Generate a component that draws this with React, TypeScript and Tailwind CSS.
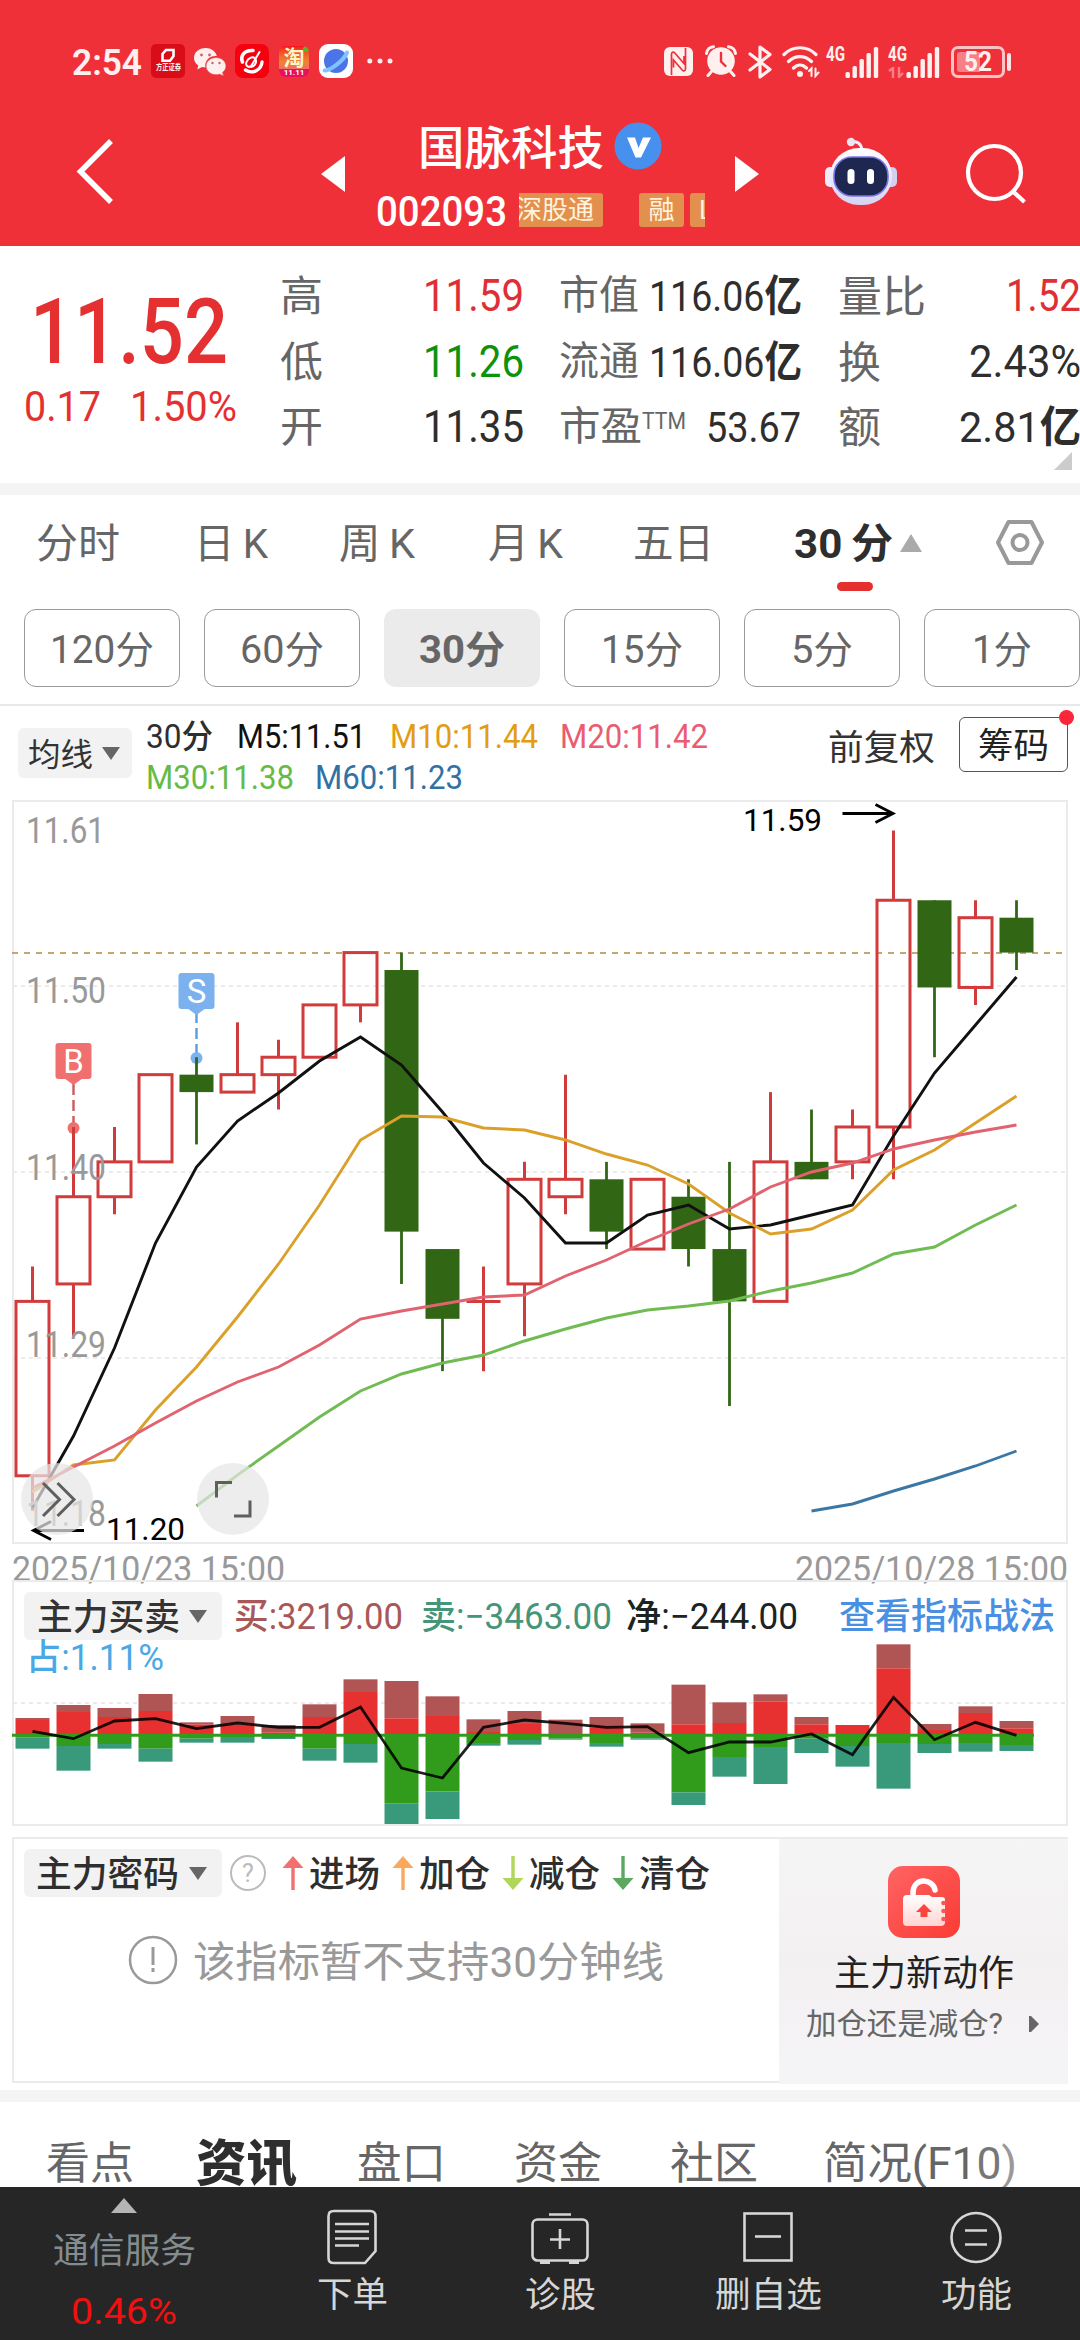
import { useLayoutEffect, useRef, type ReactNode } from "react";

/** Text squeezed or stretched horizontally so that it fills a given width. */
function Fit({ w, className = "", children }: { w: number; className?: string; children: ReactNode }) {
  const ref = useRef<HTMLSpanElement>(null);
  useLayoutEffect(() => {
    const el = ref.current;
    if (!el) return;
    el.style.transform = "none";
    const natural = el.getBoundingClientRect().width;
    if (natural > 0) el.style.transform = `translateY(2px) scaleX(${w / natural})`;
  }, [w, children]);
  return (
    <span className={`block shrink-0 whitespace-nowrap leading-none ${className}`} style={{ width: w }}>
      <span ref={ref} className="inline-block origin-left">
        {children}
      </span>
    </span>
  );
}

const STEP = 41;
const X0 = 32.5;
const cx = (i: number) => X0 + STEP * i;
// Offsets below the session high, in cents: [rising, high, bodyTop, bodyBottom, low]
const candles: [number, number, number, number, number][] = [
  [1, 25, 27, 37, 39], [1, 17, 21, 26, 29], [1, 17, 19, 21, 22], [1, 14, 14, 19, 19], [0, 13, 14, 15, 18],
  [1, 11, 14, 15, 15], [1, 12, 13, 14, 16], [1, 10, 10, 13, 13], [1, 7, 7, 10, 11], [0, 7, 8, 23, 26],
  [0, 24, 24, 28, 31], [1, 25, 27, 27, 31], [1, 19, 20, 26, 29], [1, 14, 20, 21, 22], [0, 19, 20, 23, 24],
  [1, 20, 20, 24, 24], [0, 20, 21, 24, 25], [0, 19, 24, 27, 33], [1, 15, 19, 27, 27], [0, 16, 19, 20, 20],
  [1, 16, 17, 19, 20], [1, 0, 4, 17, 20], [0, 4, 4, 9, 13], [1, 4, 5, 9, 10], [0, 4, 5, 7, 8],
];
const py = (n: number) => 830.5 + n * 17.44;

const averages: { color: string; from: number; y: number[] }[] = [
  { color: "#111111", from: 0, y: [1508, 1436, 1348, 1243, 1167, 1121, 1093, 1061, 1037, 1065, 1112, 1163, 1198, 1243, 1243, 1215, 1205, 1229, 1225, 1215, 1205, 1136, 1073, 1025, 977] },
  { color: "#dba02a", from: 0, y: [1492, 1465, 1460, 1410, 1367, 1317, 1264, 1205, 1140, 1116, 1117, 1128, 1130, 1140, 1154, 1165, 1184, 1213, 1234, 1229, 1210, 1170, 1150, 1123, 1096] },
  { color: "#e0636f", from: 0, y: [1488, 1467, 1446, 1423, 1401, 1382, 1367, 1345, 1319, 1311, 1304, 1297, 1295, 1276, 1260, 1241, 1224, 1209, 1187, 1172, 1163, 1149, 1140, 1132, 1125] },
  { color: "#70bb52", from: 4, y: [1506, 1475, 1446, 1417, 1391, 1374, 1363, 1355, 1341, 1329, 1318, 1310, 1306, 1301, 1291, 1283, 1273, 1254, 1247, 1225, 1205] },
  { color: "#3b77a5", from: 19, y: [1511, 1504, 1491, 1479, 1466, 1451] },
];

// Thirds of a pixel below the top of the flow panel: [dark red, red, green, teal]
const flows: [number, number, number, number][] = [
  [414, 420, 473, 506], [375, 396, 498, 572], [384, 411, 492, 506], [342, 393, 506, 545], [427, 434, 476, 488],
  [408, 434, 471, 488], [435, 457, 474, 477], [373, 411, 506, 542], [298, 336, 492, 548], [303, 415, 671, 732],
  [349, 408, 634, 717], [418, 456, 489, 497], [393, 432, 480, 494], [419, 462, 476, 479], [411, 443, 489, 500],
  [430, 458, 475, 479], [314, 433, 637, 675], [367, 429, 531, 590], [343, 364, 501, 612], [411, 433, 476, 519],
  [435, 435, 498, 560], [193, 265, 489, 626], [432, 450, 492, 519], [379, 399, 489, 515], [423, 445, 495, 513],
];
const net = [454, 476, 423, 416, 446, 429, 442, 442, 381, 564, 594, 442, 420, 430, 442, 440, 518, 486, 486, 462, 524, 352, 479, 427, 466];

function Signal() {
  return (
    <svg className="block h-[33px] w-[35px] shrink-0" viewBox="0 0 35 33" fill="#fff0f0">
      <rect x="0.5" y="26" width="4.4" height="6" rx="1.5" />
      <rect x="7.5" y="20" width="4.4" height="12" rx="1.5" />
      <rect x="14.5" y="13" width="4.4" height="19" rx="1.5" />
      <rect x="21.5" y="7" width="4.4" height="25" rx="1.5" />
      <rect x="28.8" y="1" width="4.4" height="31" rx="1.5" />
    </svg>
  );
}

function StatusBar() {
  return (
    <div className="flex h-[122px] items-start pt-[44px] text-[#fff0f0]">
      <Fit w={70} className="-mt-px ml-[72px] text-[36px] font-semibold">2:54</Fit>
      <div className="ml-[9px] flex h-[34px] w-[34px] shrink-0 flex-col items-center rounded-[5px] bg-[#d80d18] pt-[4px]">
        <svg className="block h-[15px] w-[14px]" viewBox="0 0 14 15" fill="none" stroke="#fff" strokeWidth="2.6">
          <path d="M5 2h7.5v6L9 12.7H1.5V6z" />
        </svg>
        <Fit w={25} className="-mt-px text-[8px] font-bold">方正证券</Fit>
      </div>
      <svg className="ml-[9px] mt-[4px] block h-[28px] w-[32px] shrink-0" viewBox="0 0 32 28">
        <path d="M11.5 0C5 0 0 4.400 0 10c0 3.200 1.700 5.800 4.300 7.500L3.300 21.500l4.600-2.400c1.200.3 2.400.5 3.600.5A10 9.500 0 0 1 22.800 8C21.700 3.400 17 0 11.500 0z" fill="#fff0f0" />
        <path d="M22 9.500c-5.500 0-10 3.900-10 8.600 0 4.800 4.500 8.700 10 8.700 1.300 0 2.500-.2 3.600-.6l4 1.800-1-3.600c2.100-1.500 3.400-3.700 3.400-6.300 0-4.700-4.500-8.600-10-8.600z" fill="#fff0f0" stroke="#e8505a" strokeWidth="0.800" />
        <g fill="#d06068">
          <circle cx="7.500" cy="7" r="1.400" /><circle cx="15.500" cy="7" r="1.400" />
          <circle cx="18.500" cy="15" r="1.200" /><circle cx="25.500" cy="15" r="1.200" />
        </g>
      </svg>
      <svg className="ml-[9px] block h-[34px] w-[34px] shrink-0" viewBox="0 0 34 34" fill="none" stroke="#fff" strokeLinecap="round">
        <rect width="34" height="34" rx="8" fill="#f6000f" stroke="none" />
        <path d="M18 6.500C9 6 5 12 7.500 18" strokeWidth="3.600" />
        <path d="M10.500 26c7 4.500 16 0 16.500-8" strokeWidth="3.400" />
        <path d="M24.500 8l-8 13.500c-2.500 3-6.500.5-5-3.500 1.500-4 6-6 8.500-3.500 2.500 3 0 8-4 8.500" strokeWidth="2" />
      </svg>
      <div className="relative ml-[10px] mt-[2px] flex h-[31px] w-[30px] shrink-0 flex-col items-center overflow-hidden rounded-[6px] bg-gradient-to-b from-[#f50c1c] via-[#ee8232] to-[#f3557b]">
        <span className="mt-[1px] text-[21px] font-bold leading-[22px] text-[#fff4c8]">淘</span>
        <span className="flex h-[8px] w-full items-center justify-center bg-[#e8105a] text-[8px] font-bold leading-none text-white">11.11</span>
        <span className="absolute right-0 top-0 h-[6px] w-[6px] rounded-full bg-[#55b82a]" />
      </div>
      <svg className="ml-[10px] block h-[34px] w-[34px] shrink-0" viewBox="0 0 34 34">
        <rect width="34" height="34" rx="9" fill="#fff" />
        <circle cx="17" cy="17" r="12" fill="#4a74e8" />
        <path d="M5.500 26.500C10 27 25 17 28 8.500" fill="none" stroke="#80c4ff" strokeWidth="4" strokeLinecap="round" />
      </svg>
      <svg className="ml-[14px] mt-[14px] block h-[6px] w-[26px] shrink-0" viewBox="0 0 26 6" fill="#fff0f0">
        <circle cx="2.800" cy="3" r="2.500" /><circle cx="13" cy="3" r="2.500" /><circle cx="23" cy="3" r="2.500" />
      </svg>
      {/* System indicators */}
      <svg className="ml-[271px] mt-[3px] block h-[29px] w-[29px] shrink-0" viewBox="0 0 29 29">
        <rect width="29" height="29" rx="6" fill="#fff0f0" />
        <path d="M7.500 28V7.500c0-2.500 1.700-3.200 3.300-1.500L20 16.500V9M21.500 1v20.500c0 2.500-1.700 3.200-3.300 1.500L9.500 13v7.500" fill="none" stroke="#ef3039" strokeWidth="1.700" />
      </svg>
      <svg className="ml-[12px] mt-[1px] block h-[32px] w-[32px] shrink-0" viewBox="0 0 32 32">
        <path d="M6.500 26.500L3 30.500M25.500 26.500l3.500 4M1.500 8.500C2 4.500 5 2 8.500 1.800M30.500 8.500C30 4.500 27 2 23.500 1.800" stroke="#fff0f0" strokeWidth="3" strokeLinecap="round" fill="none" />
        <circle cx="16" cy="16" r="13.800" fill="#fff0f0" />
        <path d="M16 8v8.500l4.500 4.500" stroke="#ef3039" strokeWidth="2.400" fill="none" strokeLinecap="round" />
      </svg>
      <svg className="ml-[11px] mt-px block h-[34px] w-[25px] shrink-0" viewBox="0 0 25 34" fill="none" stroke="#fff0f0" strokeWidth="3.200" strokeLinecap="round" strokeLinejoin="round">
        <path d="M2 9l20 15.500L12 32V2l10 7.500L2 25" />
      </svg>
      <svg className="ml-[9px] mt-[2px] block h-[32px] w-[38px] shrink-0" viewBox="0 0 38 32" fill="none" stroke="#fff0f0" strokeWidth="3.200" strokeLinecap="round">
        <path d="M2 8.500C11-.5 25-.5 34 8.500M6.500 15.500c7-6.500 16-6.500 23 0M11.500 22c4-4 9-4 13 0" />
        <circle cx="18" cy="28" r="3" fill="#fff0f0" stroke="none" />
        <path d="M27 25l2.500-2.500V30M33.500 22.500V30l3-3.500" strokeWidth="2" />
      </svg>
      <Fit w={19} className="-mt-[2px] ml-[6px] text-[20px] font-bold">4G</Fit>
      <div className="mt-[2px]"><Signal /></div>
      <div className="ml-[8px] w-[18px]">
        <Fit w={19} className="-mt-[2px] text-[20px] font-bold">4G</Fit>
        <svg className="mt-[5px] block h-[11px] w-[17px]" viewBox="0 0 17 11" fill="none" stroke="#f98088" strokeWidth="2.400">
          <path d="M1 4l4-3v10M11 0v10l4-4" />
        </svg>
      </div>
      <div className="mt-[2px]"><Signal /></div>
      <div className="ml-[10px] mt-[2px] flex h-[32px] w-[54px] shrink-0 items-center justify-center rounded-[7px] border-[3px] border-[#fcc3c6] bg-[#ef3039] p-[3px]">
        <div className="flex h-full w-full items-center justify-center rounded-[3px] bg-gradient-to-r from-[#f77f86] from-55% to-[#ef3039] to-55%">
          <Fit w={28} className="-mt-[4px] text-[27px] font-bold">52</Fit>
        </div>
      </div>
      <span className="ml-[2px] mt-[9px] h-[18px] w-[4px] shrink-0 rounded-[2px] bg-[#ffe5e6]" />
    </div>
  );
}

function Robot() {
  return (
    <svg className="block h-[68px] w-[74px] shrink-0" viewBox="0 0 74 68">
      <defs>
        <linearGradient id="shell" x1="0" y1="0" x2="0" y2="1">
          <stop offset="0" stopColor="#ffffff" /><stop offset="1" stopColor="#d5d3f2" />
        </linearGradient>
      </defs>
      <path d="M27 5c6-1 10 1 11 8" fill="none" stroke="#f0eefb" strokeWidth="3" />
      <circle cx="27" cy="5" r="4.200" fill="#ebe4f3" />
      <rect x="1" y="30" width="12" height="20" rx="5" fill="#eceafd" />
      <rect x="61" y="30" width="12" height="20" rx="5" fill="#d3cff3" />
      <rect x="6" y="11" width="62" height="57" rx="29" fill="url(#shell)" />
      <rect x="10" y="20" width="54" height="39" rx="18" fill="#1d2750" stroke="#7b74e8" strokeWidth="1.600" />
      <rect x="23.500" y="32" width="7" height="15" rx="3.500" fill="#fff" />
      <rect x="43" y="32" width="7" height="15" rx="3.500" fill="#fff" />
    </svg>
  );
}

function Header() {
  return (
    <header className="h-[246px] bg-[#f03039]">
      <StatusBar />
      <div className="flex items-start text-white">
        <svg className="ml-[76px] mt-[16px] block h-[66px] w-[38px] shrink-0" viewBox="0 0 38 66" fill="none" stroke="#fff" strokeWidth="5.500">
          <path d="M35 3L4.500 33.500 35 64" />
        </svg>
        <svg className="ml-[207px] mt-[34px] block h-[36px] w-[24px] shrink-0" viewBox="0 0 24 36" fill="#fff"><path d="M24 0v36L0 18z" /></svg>
        <div className="ml-[31px] w-[329px] shrink-0">
          <div className="flex items-center pl-[42px]">
            <Fit w={186} className="text-[46px] font-medium">国脉科技</Fit>
            <svg className="ml-[10px] block h-[48px] w-[48px] shrink-0" viewBox="0 0 48 48">
              <circle cx="24" cy="24" r="23.500" fill="#4790ee" />
              <path d="M13 15.500h8l3.500 10.500 4.500-10.500h8L27 35.500h-5.500z" fill="#fff" />
            </svg>
          </div>
          <div className="mt-[20px] flex items-start">
            <Fit w={131} className="-mt-px text-[42px] font-medium">002093</Fit>
            <div className="ml-[12px] mt-[3px] flex w-[186px] overflow-hidden text-[26px] leading-none text-[#fff3dc]">
              <div className="-ml-[3px] h-[34px] w-[87px] shrink-0 rounded-[3px] bg-[#e38f4d] pt-[4px]">深股通</div>
              <div className="ml-[36px] flex h-[34px] w-[45px] shrink-0 justify-center rounded-[3px] bg-[#e38f4d] pt-[4px]">融</div>
              <div className="ml-[6px] h-[34px] w-[45px] shrink-0 rounded-[3px] bg-[#e38f4d] pl-[9px] pt-[4px]">L2</div>
            </div>
          </div>
        </div>
        <svg className="ml-[30px] mt-[34px] block h-[36px] w-[24px] shrink-0" viewBox="0 0 24 36" fill="#fff"><path d="M0 0v36l24-18z" /></svg>
        <div className="ml-[65px] mt-[15px]"><Robot /></div>
        <svg className="ml-[67px] mt-[20px] block h-[62px] w-[62px] shrink-0" viewBox="0 0 62 62" fill="none" stroke="#fff" strokeWidth="4.200">
          <circle cx="29.500" cy="30.500" r="26.500" /><path d="M47.500 49l12 11" />
        </svg>
      </div>
    </header>
  );
}

const num = "mt-[-1px] text-[43px] font-[450] text-[#2e2e2e]";
const val = "-mt-[2px] text-[44px] font-[450]";

function Quote() {
  return (
    <section className="h-[237px] bg-white">
      <div className="flex">
        <div className="w-[280px] shrink-0 text-[#e43030]">
          <Fit w={198} className="ml-[30px] mt-[40px] text-[90px] font-medium">11.52</Fit>
          <div className="mt-[8px] flex text-[42px] font-[450]">
            <Fit w={77} className="ml-[24px]">0.17</Fit>
            <Fit w={107} className="ml-[29px]">1.50%</Fit>
          </div>
        </div>
        <div className="w-[244px] shrink-0 pt-[28px] text-[42px] text-[#666]">
          <div className="flex h-[65.5px] justify-between"><Fit w={43}>高</Fit><Fit w={101} className={val + " text-[#e02f34]"}>11.59</Fit></div>
          <div className="flex h-[65.5px] justify-between"><Fit w={43}>低</Fit><Fit w={101} className={val + " text-[#0c930c]"}>11.26</Fit></div>
          <div className="flex h-[65.5px] justify-between"><Fit w={43}>开</Fit><Fit w={101} className={val + " text-[#2e2e2e]"}>11.35</Fit></div>
        </div>
        <div className="ml-[35px] w-[243px] shrink-0 pt-[28px] text-[40px] text-[#666]">
          <div className="flex h-[65.5px] justify-between"><Fit w={80}>市值</Fit><Fit w={153} className={num}>116.06<b>亿</b></Fit></div>
          <div className="flex h-[65.5px] justify-between"><Fit w={80}>流通</Fit><Fit w={153} className={num}>116.06<b>亿</b></Fit></div>
          <div className="flex h-[65.5px]"><Fit w={83}>市盈</Fit><Fit w={44} className="mt-[3px] text-[23px]">TTM</Fit><Fit w={95} className={"ml-[20px] " + num}>53.67</Fit></div>
        </div>
        <div className="ml-[36px] w-[243px] shrink-0 pt-[28px] text-[43px] text-[#666]">
          <div className="flex h-[65.5px] justify-between"><Fit w={88}>量比</Fit><Fit w={75} className={val + " text-[#e02f34]"}>1.52</Fit></div>
          <div className="flex h-[65.5px] justify-between"><Fit w={43}>换</Fit><Fit w={112} className={val + " text-[#2e2e2e]"}>2.43%</Fit></div>
          <div className="flex h-[65.5px] justify-between"><Fit w={43}>额</Fit><Fit w={122} className={num}>2.81<b>亿</b></Fit></div>
        </div>
      </div>
      <svg className="ml-[1054px] -mt-[19px] block h-[18px] w-[18px]" viewBox="0 0 18 18" fill="#ccc"><path d="M18 0v18H0z" /></svg>
    </section>
  );
}

function Periods() {
  const spans: [string, number, boolean][] = [
    ["120分", 104, false], ["60分", 84, false], ["30分", 86, true], ["15分", 82, false], ["5分", 62, false], ["1分", 60, false],
  ];
  return (
    <section className="h-[211px] border-b-2 border-[#e8e8e8]">
      <div className="flex h-[114px] items-start pt-[27px] text-[41px] text-[#666]">
        <Fit w={84} className="ml-[36px]">分时</Fit>
        <Fit w={74} className="ml-[74px]">日{"\u2009"}K</Fit>
        <Fit w={76} className="ml-[71px]">周{"\u2009"}K</Fit>
        <Fit w={75} className="ml-[73px]">月{"\u2009"}K</Fit>
        <Fit w={81} className="ml-[70px]">五日</Fit>
        <div className="ml-[79px] flex w-[100px] shrink-0 flex-col items-center">
          <Fit w={99} className="font-bold text-[#2e2e2e]">30{"\u2009"}分</Fit>
          <span className="mt-[19px] ml-[24px] h-[9px] w-[36px] rounded-full bg-[#e52f2f]" />
        </div>
        <svg className="ml-[7px] mt-[12px] block h-[18px] w-[22px] shrink-0" viewBox="0 0 22 18" fill="#aaa"><path d="M11 0l11 18H0z" /></svg>
        <svg className="ml-[73px] -mt-[3px] block h-[47px] w-[50px] shrink-0" viewBox="0 0 50 47" fill="none" stroke="#999" strokeWidth="4" strokeLinejoin="round">
          <path d="M13.500 3h23L47 23.500 36.500 44h-23L3 23.500z" /><circle cx="25" cy="23.500" r="7.500" />
        </svg>
      </div>
      <div className="flex gap-[24px] pl-[24px]">
        {spans.map(([label, w, on]) => (
          <div key={label} className={`flex h-[78px] w-[156px] shrink-0 items-center justify-center rounded-[12px] text-[38px] text-[#666] ${on ? "bg-[#ebebeb] font-bold" : "border-[1.500px] border-[#999]"}`}>
            <Fit w={w}>{label}</Fit>
          </div>
        ))}
      </div>
    </section>
  );
}

function Down({ className = "" }: { className?: string }) {
  return <svg className={`block h-[13px] w-[18px] shrink-0 ${className}`} viewBox="0 0 18 13" fill="#666"><path d="M0 0h18L9 13z" /></svg>;
}

function Legend() {
  return (
    <div className="flex h-[94px] items-start">
      <div className="ml-[18px] mt-[22px] flex h-[50px] w-[114px] shrink-0 items-center rounded-[6px] bg-[#f2f2f2] text-[32px] text-[#333]">
        <Fit w={65} className="ml-[10px]">均线</Fit><Down className="ml-[9px]" />
      </div>
      <div className="ml-[14px] w-[660px] shrink-0 pt-[12px] text-[33px] font-[450]">
        <div className="flex">
          <Fit w={67} className="text-[#2e2e2e]">30分</Fit>
          <Fit w={129} className="ml-[24px] text-[#111]">M5:11.51</Fit>
          <Fit w={148} className="ml-[24px] text-[#e29d12]">M10:11.44</Fit>
          <Fit w={148} className="ml-[22px] text-[#ea5c72]">M20:11.42</Fit>
        </div>
        <div className="mt-[8px] flex">
          <Fit w={148} className="text-[#66bb46]">M30:11.38</Fit>
          <Fit w={148} className="ml-[21px] text-[#3271a3]">M60:11.23</Fit>
        </div>
      </div>
      <Fit w={107} className="ml-[22px] mt-[23px] text-[35px] text-[#333]">前复权</Fit>
      <div className="relative ml-[24px] mt-[11px] flex h-[55px] w-[109px] shrink-0 items-center justify-center rounded-[6px] border-[1.500px] border-[#555] text-[35px] text-[#222]">
        <Fit w={71}>筹码</Fit>
        <span className="absolute -right-[7px] -top-[8px] h-[15px] w-[15px] rounded-full bg-[#fb2738]" />
      </div>
    </div>
  );
}

function KChart() {
  return (
    <svg className="block h-[746px] w-[1080px]" viewBox="0 799 1080 746" fill="none">
      <rect x="13" y="801" width="1054" height="742" stroke="#ebebeb" strokeWidth="2" />
      <path d="M13 986h1054M13 1172h1054M13 1358h1054" stroke="#ebebeb" strokeWidth="1.800" strokeDasharray="4 4" />
      <path d="M12 953h1054" stroke="#c8a472" strokeWidth="2" strokeDasharray="6 6" />
      <path d="M73.500 1084v44" stroke="#cd5a5a" strokeWidth="2.400" strokeDasharray="11 5" />
      <circle cx="73.500" cy="1128" r="6" fill="#f07070" />
      <path d="M196.500 1012v46" stroke="#5b9bdf" strokeWidth="2.400" strokeDasharray="11 5" />
      <circle cx="196.500" cy="1058" r="6" fill="#7bb3ef" />
      {candles.map(([up, h, t, b, l], i) =>
        up ? (
          <g key={i} stroke="#d13b3b" strokeWidth="3">
            <path d={`M${cx(i)} ${py(h)}V${py(t)}M${cx(i)} ${py(b)}V${py(l)}`} />
            {t === b ? <path d={`M${cx(i) - 17} ${py(t)}h34`} /> : <rect x={cx(i) - 16.500} y={py(t)} width="33" height={py(b) - py(t)} />}
          </g>
        ) : (
          <g key={i}>
            <path d={`M${cx(i)} ${py(h)}V${py(l)}`} stroke="#316614" strokeWidth="2.800" />
            <rect x={cx(i) - 17} y={py(t)} width="34" height={py(b) - py(t)} fill="#316614" />
          </g>
        ),
      )}
      {averages.map((a) => (
        <polyline key={a.color} points={a.y.map((y, i) => `${cx(i + a.from)},${y}`).join(" ")} stroke={a.color} strokeWidth="2.900" />
      ))}
      <rect x="55.500" y="1043" width="36" height="36" rx="3" fill="#f07070" /><path d="M64 1078h19l-9.500 7z" fill="#f07070" />
      <rect x="178.500" y="973" width="36" height="36" rx="3" fill="#7bb1ef" /><path d="M187 1008h19l-9.500 7z" fill="#7bb1ef" />
      <g fill="#fff" fontSize="33" fontWeight="450" textAnchor="middle">
        <text x="73.500" y="1072.500">B</text><text x="196.500" y="1002.500">S</text>
      </g>
      <g fill="#999" fontSize="36" fontWeight="450">
        <text x="26" y="843" textLength="79" lengthAdjust="spacingAndGlyphs">11.61</text>
        <text x="26" y="1003" textLength="80" lengthAdjust="spacingAndGlyphs">11.50</text>
        <text x="26" y="1180" textLength="80" lengthAdjust="spacingAndGlyphs">11.40</text>
        <text x="26" y="1357" textLength="80" lengthAdjust="spacingAndGlyphs">11.29</text>
        <text x="26" y="1526" textLength="80" lengthAdjust="spacingAndGlyphs">11.18</text>
      </g>
      <g fill="#000" fontSize="31">
        <text x="743" y="831" textLength="79" lengthAdjust="spacingAndGlyphs">11.59</text>
        <text x="106" y="1539.500" textLength="79" lengthAdjust="spacingAndGlyphs">11.20</text>
      </g>
      <path d="M842.500 813.500H893M875.500 804.500l17.500 9-17.500 9" stroke="#000" strokeWidth="2.800" />
      <path d="M84 1530.500H34M51 1521.500l-17.500 9 17.500 9" stroke="#000" strokeWidth="2.800" />
      <circle cx="57" cy="1499" r="36" fill="#e6e6e6" fillOpacity="0.72" />
      <circle cx="233" cy="1499" r="36" fill="#e6e6e6" fillOpacity="0.72" />
      <path d="M43 1483l16.500 16.500L43 1516M57.500 1483l16.500 16.500-16.500 16.500M216.500 1497.500v-15H232M250 1500.500v15.500h-16" stroke="#5f5f5f" strokeWidth="3" />
    </svg>
  );
}

function FlowPanel() {
  return (
    <section className="relative h-[247px]">
      <svg className="absolute left-0 top-0 block h-[247px] w-[1080px]" viewBox="0 0 1080 247" fill="none">
        <rect x="13" y="1" width="1054" height="244" stroke="#ebebeb" strokeWidth="2" />
        <path d="M13 123h1054" stroke="#ebebeb" strokeWidth="1.800" strokeDasharray="4 4" />
        {flows.map(([a, b, c, d], i) => (
          <g key={i} transform={`translate(${cx(i) - 17} 0)`}>
            <rect y={a / 3} width="34" height={(b - a) / 3} fill="#b05454" />
            <rect y={b / 3} width="34" height={(465 - b) / 3} fill="#e73030" />
            <rect y="154" width="34" height={c / 3 - 154} fill="#319c1c" />
            <rect y={c / 3} width="34" height={(d - c) / 3} fill="#389a7b" />
          </g>
        ))}
        <path d="M12 155.300h1022" stroke="#319c1c" strokeWidth="3" />
        <polyline points={net.map((n, i) => `${cx(i)},${n / 3}`).join(" ")} stroke="#000" strokeOpacity="0.87" strokeWidth="2.800" />
      </svg>
      <div className="relative flex items-start pt-[12px] text-[36px]">
        <div className="ml-[24px] flex h-[48px] w-[198px] shrink-0 items-center rounded-[6px] bg-[#f2f2f2]">
          <Fit w={143} className="ml-[13px] text-[36px] font-medium text-[#333]">主力买卖</Fit><Down className="ml-[9px]" />
        </div>
        <Fit w={169} className="ml-[12px] mt-[5px] font-[450] text-[#a85858]">买:3219.00</Fit>
        <Fit w={191} className="ml-[18px] mt-[5px] font-[450] text-[#45957a]">卖:−3463.00</Fit>
        <Fit w={172} className="ml-[14px] mt-[5px] font-[450] text-[#1b241e]">净:−244.00</Fit>
        <Fit w={216} className="ml-[41px] mt-[5px] font-medium text-[#4a90e2]">查看指标战法</Fit>
      </div>
      <Fit w={138} className="relative -mt-[2px] ml-[26px] text-[36px] text-[#4aa8e6]"><b className="font-medium">占</b>:1.11%</Fit>
    </section>
  );
}

function Arrow({ color, up }: { color: string; up?: boolean }) {
  return (
    <svg className={`block h-[34px] w-[22px] shrink-0 ${up ? "" : "rotate-180"}`} viewBox="0 0 22 34">
      <path d="M11 0l10.500 12h-21z" fill={color} /><path d="M11 8v26" stroke={color} strokeWidth="3.400" />
    </svg>
  );
}

function CodePanel() {
  return (
    <section className="mx-[12px] mt-[10px] flex h-[246px] border-2 border-[#ebebeb]">
      <div className="w-[765px] shrink-0">
        <div className="flex items-center pt-[10px] text-[36px] text-[#2e2e2e]">
          <div className="ml-[10px] flex h-[48px] w-[198px] shrink-0 items-center rounded-[6px] bg-[#f2f2f2]">
            <Fit w={143} className="ml-[12px] font-medium">主力密码</Fit><Down className="ml-[10px]" />
          </div>
          <span className="ml-[8px] flex h-[36px] w-[36px] shrink-0 items-center justify-center rounded-full border-[2.500px] border-[#bbb] text-[25px] leading-none text-[#bbb]">?</span>
          <div className="ml-[16px] flex items-center"><Arrow up color="#f27070" /><Fit w={71} className="ml-[5px] font-medium">进场</Fit></div>
          <div className="ml-[12px] flex items-center"><Arrow up color="#f9a85d" /><Fit w={71} className="ml-[5px] font-medium">加仓</Fit></div>
          <div className="ml-[12px] flex items-center"><Arrow color="#b0d65a" /><Fit w={71} className="ml-[5px] font-medium">减仓</Fit></div>
          <div className="ml-[12px] flex items-center"><Arrow color="#5ba85f" /><Fit w={71} className="ml-[5px] font-medium">清仓</Fit></div>
        </div>
        <div className="mt-[38px] flex items-center text-[42px] text-[#999]">
          <svg className="ml-[114px] block h-[50px] w-[50px] shrink-0" viewBox="0 0 50 50" fill="none" stroke="#999" strokeWidth="2.500">
            <circle cx="25" cy="25" r="23" /><path d="M25 12v18M25 33v4" strokeWidth="3" />
          </svg>
          <Fit w={471} className="ml-[15px] mt-px">该指标暂不支持30分钟线</Fit>
        </div>
      </div>
      <div className="-mr-[2px] -mb-[3px] flex flex-1 flex-col items-center bg-gradient-to-b from-[#f5f5f6] via-[#f3f0f1] to-[#f5f4f7]">
        <svg className="mt-[27px] block h-[72px] w-[72px]" viewBox="0 0 72 72">
          <defs>
            <linearGradient id="lock" x1="0" y1="0" x2="1" y2="1"><stop offset="0" stopColor="#ff6464" /><stop offset="1" stopColor="#fb3a33" /></linearGradient>
            <linearGradient id="body" x1="0" y1="0" x2="0" y2="1"><stop offset="0" stopColor="#fff" /><stop offset="1" stopColor="#ffd4d2" /></linearGradient>
          </defs>
          <rect width="72" height="72" rx="15" fill="url(#lock)" />
          <path d="M25 31V27C25 11 45 12 47 24" fill="none" stroke="#fff" strokeWidth="5.500" strokeLinecap="round" />
          <path d="M19 29h22l3 2h10q3 0 3 3v22q0 4-4 4H19q-4 0-4-4V33q0-4 4-4z" fill="url(#body)" />
          <path d="M36 38l8 8h-4.500v5h-7v-5H28z" fill="#fb4640" />
          <g fill="#fc5650"><circle cx="55.500" cy="37" r="2.300" /><circle cx="55.500" cy="45" r="2.300" /><circle cx="55.500" cy="53" r="2.300" /></g>
        </svg>
        <Fit w={180} className="mt-[16px] text-[36px] text-[#222]">主力新动作</Fit>
        <div className="mt-[17px] flex items-center self-start text-[30px] text-[#666]">
          <Fit w={197} className="ml-[27px]">加仓还是减仓?</Fit>
          <svg className="ml-[26px] mt-[3px] block h-[16px] w-[10px]" viewBox="0 0 10 16" fill="#666"><path d="M0 0h2l8 8-8 8H0z" /></svg>
        </div>
      </div>
    </section>
  );
}

function InfoTabs() {
  return (
    <nav className="flex h-[85px] items-center overflow-hidden pt-[34px] text-[44px] text-[#666]">
      <Fit w={88} className="ml-[46px]">看点</Fit>
      <Fit w={101} className="ml-[62px] text-[50px] font-black text-[#2e2e2e]">资讯</Fit>
      <Fit w={89} className="ml-[60px]">盘口</Fit>
      <Fit w={88} className="ml-[68px]">资金</Fit>
      <Fit w={88} className="ml-[68px]">社区</Fit>
      <Fit w={194} className="ml-[65px]">简况(F1<span className="text-[#777]">0</span><span className="text-[#999]">)</span></Fit>
    </nav>
  );
}

function BottomBar() {
  const label = "text-[35px] text-[#d6d6d6]";
  return (
    <footer className="flex h-[153px] bg-[#262626]">
      <div className="flex w-[248px] shrink-0 flex-col items-center pt-[11px]">
        <svg className="block h-[15px] w-[26px]" viewBox="0 0 26 15" fill="#b5b5b5"><path d="M13 0l13 15H0z" /></svg>
        <Fit w={143} className="mt-[19px] text-[35px] text-[#838c90]">通信服务</Fit>
        <Fit w={106} className="mt-[24px] text-[37px] font-[450] text-[#f01010]">0.46%</Fit>
      </div>
      <div className="flex w-[208px] shrink-0 flex-col items-center pt-[22px]">
        <svg className="block h-[56px] w-[50px]" viewBox="0 0 50 56" fill="none" stroke="#d6d6d6" strokeWidth="2.600">
          <path d="M7 2h36c4 0 5.500 1.500 5.500 5.500V42L38 54H7c-4 0-5.500-1.500-5.500-5.500v-41C1.500 3.500 3 2 7 2z" /><path d="M8 15h34M8 22.500h34M8 29.500h34M8 36.500h24" />
        </svg>
        <Fit w={71} className={"mt-[11px] " + label}>下单</Fit>
      </div>
      <div className="flex w-[208px] shrink-0 flex-col items-center pt-[24px]">
        <svg className="block h-[54px] w-[58px]" viewBox="0 0 58 54" fill="none" stroke="#d6d6d6" strokeWidth="2.600">
          <rect x="1.500" y="8.500" width="55" height="41" rx="5" /><path d="M18 3.500h22M29 18v20M19 28.500h20" /><path d="M9 51h10M38 51h10" strokeWidth="4" />
        </svg>
        <Fit w={71} className={"mt-[11px] " + label}>诊股</Fit>
      </div>
      <div className="flex w-[208px] shrink-0 flex-col items-center pt-[24px]">
        <svg className="block h-[54px] w-[50px]" viewBox="0 0 50 54" fill="none" stroke="#d6d6d6" strokeWidth="2.600">
          <rect x="1.500" y="2.500" width="47" height="47" /><path d="M12 25.500h26" />
        </svg>
        <Fit w={107} className={"mt-[11px] " + label}>删自选</Fit>
      </div>
      <div className="flex w-[208px] shrink-0 flex-col items-center pt-[24px]">
        <svg className="block h-[54px] w-[52px]" viewBox="0 0 52 54" fill="none" stroke="#d6d6d6" strokeWidth="2.600">
          <circle cx="26" cy="26.500" r="24.500" /><path d="M15 19.500h22M15 33.500h22" />
        </svg>
        <Fit w={71} className={"mt-[11px] " + label}>功能</Fit>
      </div>
    </footer>
  );
}

export default function App() {
  return (
    <div className="flex h-[2340px] w-[1080px] flex-col overflow-hidden bg-white font-['Roboto','Noto_Sans_CJK_SC',sans-serif]">
      <Header />
      <Quote />
      <div className="h-[12px] shrink-0 bg-[#f4f4f4]" />
      <Periods />
      <Legend />
      <div className="-mt-px h-[744px] shrink-0"><KChart /></div>
      <div className="flex h-[37px] shrink-0 items-start justify-between px-[12px] pt-[7px] text-[35px] font-[450] text-[#999]">
        <Fit w={273}>2025/10/23 15:00</Fit>
        <Fit w={273}>2025/10/28 15:00</Fit>
      </div>
      <FlowPanel />
      <CodePanel />
      <div className="mt-[7px] h-[12px] shrink-0 bg-[#f4f4f4]" />
      <InfoTabs />
      <BottomBar />
    </div>
  );
}
